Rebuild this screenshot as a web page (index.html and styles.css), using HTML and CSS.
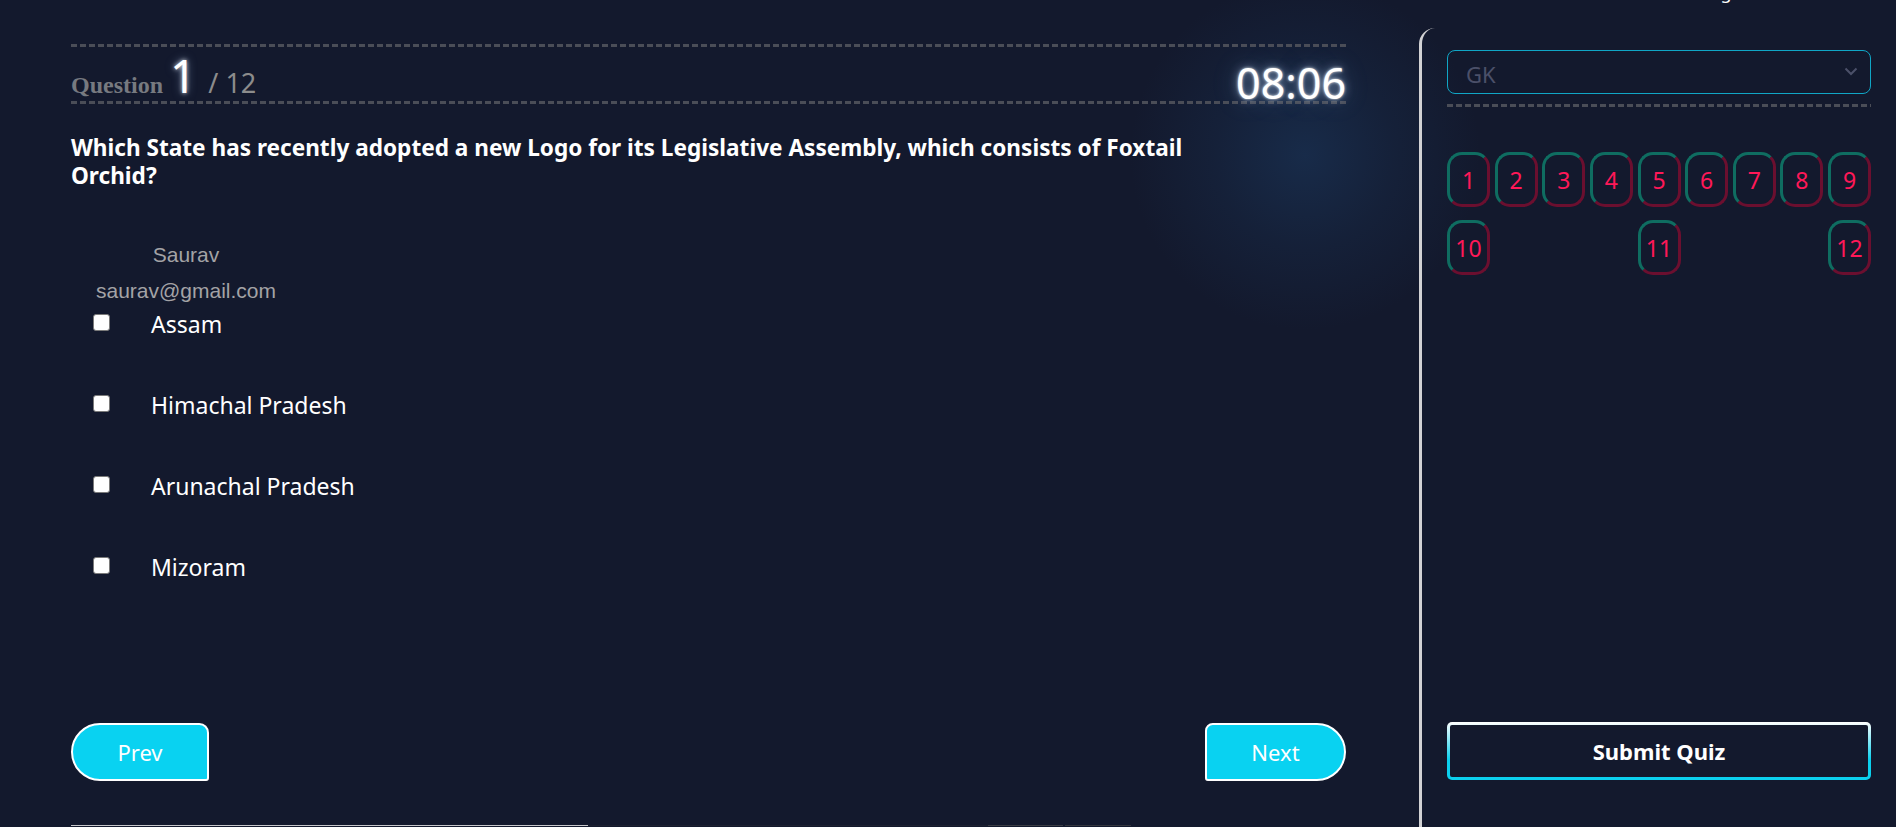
FILE: index.html
```html
<!DOCTYPE html>
<html lang="en">
<head>
<meta charset="utf-8">
<title>Quiz</title>
<link rel="stylesheet" href="styles.css">
</head>
<body>
<header class="topbar"><span class="topbar-link">Logout</span></header>
<div class="page">
  <main class="quiz">
    <div class="quiz-head">
      <div class="q-count"><span class="q-label">Question</span><span class="q-num">1</span><span class="q-total">/ 12</span></div>
      <div class="timer">08:06</div>
    </div>
    <h2 class="q-text">Which State has recently adopted a new Logo for its Legislative Assembly, which consists of Foxtail Orchid?</h2>
    <div class="user">
      <div class="user-name">Saurav</div>
      <div class="user-email">saurav@gmail.com</div>
    </div>
    <ul class="options">
      <li class="option"><input type="checkbox" class="check"><span class="opt-label">Assam</span></li>
      <li class="option"><input type="checkbox" class="check"><span class="opt-label">Himachal Pradesh</span></li>
      <li class="option"><input type="checkbox" class="check"><span class="opt-label">Arunachal Pradesh</span></li>
      <li class="option"><input type="checkbox" class="check"><span class="opt-label">Mizoram</span></li>
    </ul>
    <div class="nav">
      <button class="btn-nav btn-prev">Prev</button>
      <button class="btn-nav btn-next">Next</button>
    </div>
    <div class="fold">
      <span class="fold-a"></span><span class="fold-b"></span><span class="fold-c"></span><span class="fold-d"></span>
    </div>
  </main>
  <aside class="panel">
    <div class="select">
      <span class="select-value">GK</span>
      <svg class="chevron" width="14" height="9" viewBox="0 0 14 9"><path d="M1.5 1.5 L7 7 L12.5 1.5" fill="none" stroke="#4b5069" stroke-width="2"/></svg>
    </div>
    <div class="dash"></div>
    <div class="grid">
      <button class="qbtn">1</button>
      <button class="qbtn">2</button>
      <button class="qbtn">3</button>
      <button class="qbtn">4</button>
      <button class="qbtn">5</button>
      <button class="qbtn">6</button>
      <button class="qbtn">7</button>
      <button class="qbtn">8</button>
      <button class="qbtn">9</button>
      <button class="qbtn">10</button>
      <button class="qbtn">11</button>
      <button class="qbtn">12</button>
    </div>
    <button class="submit">Submit Quiz</button>
  </aside>
</div>
</body>
</html>
```

FILE: styles.css
```css
* { box-sizing: border-box; }

html, body {
  margin: 0;
  height: 827px;
  overflow: hidden;
}

body {
  background:
    radial-gradient(circle at 1305px 155px, rgba(27, 55, 92, 0.6) 0, rgba(27, 55, 92, 0.25) 90px, rgba(27, 55, 92, 0) 175px),
    #13192d;
  color: #fff;
  font-family: "Noto Sans", "Open Sans", sans-serif;
}

.topbar {
  height: 28px;
  display: flex;
  justify-content: flex-end;
  padding-right: 136px;
}

.topbar-link {
  font-size: 18px;
  line-height: 20px;
  margin-top: -18px;
  color: #fff;
}

.page {
  display: flex;
  height: 799px;
  padding-left: 71px;
}

.quiz {
  width: 1275px;
  margin-right: 73px;
  display: flex;
  flex-direction: column;
}

.quiz-head {
  margin-top: 16px;
  height: 60px;
  padding: 3px 0;
  display: flex;
  justify-content: space-between;
  align-items: flex-start;
  background-image:
    repeating-linear-gradient(90deg, #4a4d57 0 6px, transparent 6px 9px),
    repeating-linear-gradient(90deg, #4a4d57 0 6px, transparent 6px 9px);
  background-size: 100% 3px, 100% 3px;
  background-position: 0 0, 0 100%;
  background-repeat: no-repeat;
}

.q-count {
  display: flex;
  align-items: baseline;
  margin-top: 6px;
}

.q-label {
  font-family: "Liberation Serif", serif;
  font-weight: 700;
  font-size: 24px;
  line-height: 45px;
  color: #777a80;
}

.q-num {
  font-size: 46px;
  line-height: 45px;
  font-weight: 400;
  font-stretch: 87.5%;
  margin-left: 7px;
  color: #fff;
  text-shadow: 0 0 4px rgba(255, 255, 255, 0.8), 0 0 10px rgba(180, 210, 255, 0.5);
}

.q-total {
  font-size: 27px;
  line-height: 45px;
  font-stretch: 87.5%;
  margin-left: 12px;
  color: #8c8c8c;
}

.timer {
  margin-top: 14px;
  font-size: 43px;
  line-height: 43px;
  font-stretch: 87.5%;
  color: #fff;
  text-shadow:
    0 0 3px rgba(255, 255, 255, 0.9),
    0 0 10px rgba(190, 220, 255, 0.6),
    0 0 24px rgba(120, 160, 210, 0.45);
}

.q-text {
  margin: 30px 0 0;
  max-width: 1160px;
  font-size: 22.6px;
  line-height: 28px;
  font-weight: 700;
  font-stretch: 87.5%;
  color: #fff;
}

.user {
  margin-top: 47px;
  width: 230px;
  text-align: center;
  font-family: "Liberation Sans", Arial, sans-serif;
  font-size: 21px;
  line-height: 36px;
  color: #a3a3a6;
}

.options {
  list-style: none;
  margin: 0;
  padding: 0;
}

.option {
  height: 81px;
  display: flex;
  align-items: flex-start;
}

.check {
  appearance: none;
  -webkit-appearance: none;
  margin: 5px 0 0 22px;
  width: 17px;
  height: 17px;
  background: #fff;
  border: 1px solid #7a7a7a;
  border-radius: 3px;
}

.opt-label {
  margin-left: 41px;
  font-size: 23px;
  line-height: 30px;
  font-stretch: 87.5%;
  color: #fff;
}

.nav {
  margin-top: 90px;
  display: flex;
  justify-content: space-between;
}

.btn-nav {
  height: 58px;
  background: #09d2f1;
  border: 2px solid #fff;
  color: #fff;
  font-family: "Noto Sans", "Open Sans", sans-serif;
  font-size: 22px;
  font-stretch: 87.5%;
  padding: 0;
}

.btn-prev {
  width: 138px;
  border-radius: 30px 10px 3px 30px;
}

.btn-next {
  width: 141px;
  border-radius: 8px 30px 30px 3px;
}

.fold {
  margin-top: 44px;
  height: 1px;
  display: flex;
}

.fold-a { width: 517px; background: #c8c8cc; }
.fold-b { width: 400px; background: #1c2030; }
.fold-c { width: 75px; background: #3a3c44; }
.fold-d { width: 66px; margin-left: 2px; background: #33353d; }

.panel {
  width: 477px;
  border-left: 3px solid #d2d2d4;
  border-top-left-radius: 16px;
  padding: 22px 25px 47px;
  display: flex;
  flex-direction: column;
}

.select {
  height: 44px;
  border: 1px solid #10a6c6;
  border-radius: 8px;
  display: flex;
  align-items: center;
  justify-content: space-between;
  padding: 4px 12px 0 18px;
}

.select-value {
  font-size: 22px;
  font-stretch: 87.5%;
  color: #4b5069;
}

.chevron {
  margin-bottom: 6px;
}

.dash {
  margin-top: 10px;
  height: 3px;
  background-image: repeating-linear-gradient(90deg, #4a4d57 0 6px, transparent 6px 9px);
}

.grid {
  margin-top: 45px;
  display: flex;
  flex-wrap: wrap;
  justify-content: space-between;
  row-gap: 13px;
}

.qbtn {
  width: 43px;
  height: 55px;
  padding: 0;
  background: transparent;
  border: 3px solid;
  border-color: #0f6d61 #6b0f2f #6b0f2f #0f6d61;
  border-radius: 15px;
  color: #ff1858;
  font-family: "Noto Sans", "Open Sans", sans-serif;
  font-size: 23px;
  font-stretch: 87.5%;
}

.submit {
  margin-top: auto;
  height: 58px;
  border: 3px solid transparent;
  border-radius: 5px;
  background:
    linear-gradient(#13192d, #13192d) padding-box,
    linear-gradient(180deg, #ffffff 0%, #0bd0ee 65%, #0bd0ee 100%) border-box;
  color: #fff;
  font-family: "Noto Sans", "Open Sans", sans-serif;
  font-size: 22px;
  font-weight: 700;
  font-stretch: 87.5%;
}
```
